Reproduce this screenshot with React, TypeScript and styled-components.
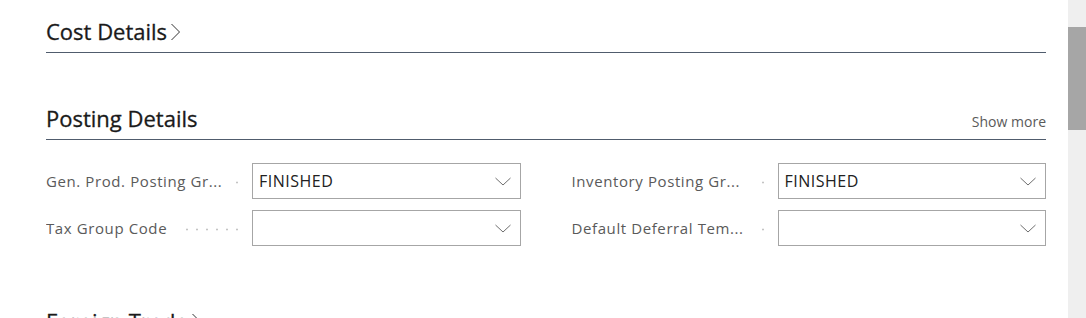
import styled, { createGlobalStyle } from "styled-components";

const GlobalStyle = createGlobalStyle`
  html, body {
    margin: 0;
    padding: 0;
    background: #ffffff;
    overflow: hidden;
  }
  body {
    font-family: "Open Sans", "Noto Sans", sans-serif;
    color: #212121;
  }
`;

type FieldData = { label: string; value: string; dots: number };

const fields: FieldData[] = [
  { label: "Gen. Prod. Posting Gr...", value: "FINISHED", dots: 1 },
  { label: "Inventory Posting Gr...", value: "FINISHED", dots: 1 },
  { label: "Tax Group Code", value: "", dots: 6 },
  { label: "Default Deferral Tem...", value: "", dots: 1 },
];

function ChevronRight() {
  return (
    <HeadingChevron width="11" height="18" viewBox="0 0 11 18">
      <polyline points="1.5,1 9.5,9 1.5,17" fill="none" stroke="#333" strokeWidth="1" />
    </HeadingChevron>
  );
}

function ChevronDown() {
  return (
    <DropArrow width="16" height="9" viewBox="0 0 16 9">
      <polyline points="0.5,1 8,8 15.5,1" fill="none" stroke="#6e6e6e" strokeWidth="1" />
    </DropArrow>
  );
}

export default function App() {
  return (
    <>
      <GlobalStyle />
      <Page>
        <Content>
          <Section>
            <SectionHeader>
              <Heading>
                Cost Details
                <ChevronRight />
              </Heading>
            </SectionHeader>
          </Section>

          <Section>
            <SectionHeader>
              <Heading>Posting Details</Heading>
              <ShowMore>Show more</ShowMore>
            </SectionHeader>
            <FieldGrid>
              {fields.map((f) => (
                <Field key={f.label}>
                  <Label>
                    <LabelText>{f.label}</LabelText>
                    <Leader $dots={f.dots} />
                  </Label>
                  <Select>
                    <SelectValue>{f.value}</SelectValue>
                    <ChevronDown />
                  </Select>
                </Field>
              ))}
            </FieldGrid>
          </Section>

          <Section>
            <SectionHeader>
              <Heading>
                Foreign Trade
                <ChevronRight />
              </Heading>
            </SectionHeader>
          </Section>
        </Content>
        <Scrollbar>
          <Thumb />
        </Scrollbar>
      </Page>
    </>
  );
}

const Page = styled.div`
  display: flex;
  height: 318px;
  overflow: hidden;
`;

const Content = styled.div`
  flex: 1;
  padding: 16px 22px 0 46px;
`;

const Section = styled.section`
  margin-bottom: 50px;
`;

const SectionHeader = styled.div`
  display: flex;
  justify-content: space-between;
  align-items: flex-end;
  padding-bottom: 6px;
  border-bottom: 1px solid #505c6d;
`;

const Heading = styled.h2`
  margin: 0;
  font-size: 22px;
  line-height: 30px;
  font-weight: 400;
  color: #1a1a1a;
  -webkit-text-stroke: 0.3px #1a1a1a;
  display: flex;
  align-items: center;
`;

const HeadingChevron = styled.svg`
  margin-left: 3px;
  margin-top: 1px;
`;

const ShowMore = styled.a`
  font-size: 14px;
  line-height: 20px;
  color: #5a5a5a;
  cursor: pointer;
  margin-bottom: 1px;
`;

const FieldGrid = styled.div`
  display: grid;
  grid-template-columns: 1fr 1fr;
  column-gap: 51px;
  row-gap: 11px;
  padding: 23px 0 10px;
`;

const Field = styled.div`
  display: grid;
  grid-template-columns: 206px 1fr;
  align-items: center;
`;

const Label = styled.label`
  display: flex;
  align-items: center;
  padding-right: 10px;
  min-width: 0;
`;

const LabelText = styled.span`
  font-size: 15px;
  letter-spacing: 0.6px;
  color: #5a5a5a;
  white-space: nowrap;
  overflow: hidden;
`;

const Leader = styled.span<{ $dots: number }>`
  flex: 1;
  height: 3px;
  margin-top: 2px;
  margin-left: auto;
  max-width: ${(p) => p.$dots * 10}px;
  background-image: radial-gradient(circle, #c4c4c4 0.9px, transparent 1.2px);
  background-size: 10px 3px;
  background-repeat: repeat-x;
  background-position: right center;
`;

const Select = styled.div`
  display: flex;
  align-items: center;
  justify-content: space-between;
  height: 36px;
  box-sizing: border-box;
  border: 1px solid #a6a6a6;
  padding: 0 9px 0 6px;
  background: #fff;
`;

const SelectValue = styled.span`
  font-size: 16px;
  letter-spacing: 0.5px;
  color: #212121;
`;

const DropArrow = styled.svg`
  flex-shrink: 0;
`;

const Scrollbar = styled.div`
  width: 18px;
  flex-shrink: 0;
  background: #efefef;
`;

const Thumb = styled.div`
  margin-top: 27px;
  height: 103px;
  background: #a6a6a6;
`;
